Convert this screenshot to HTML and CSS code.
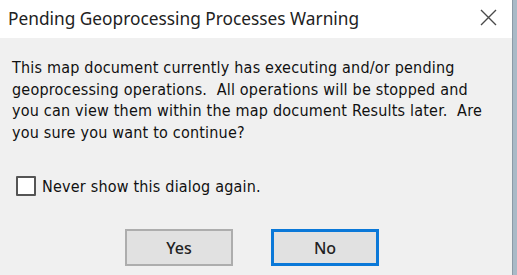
FILE: index.html
```html
<!DOCTYPE html>
<html>
<head>
<meta charset="utf-8">
<link rel="stylesheet" href="styles.css">
</head>
<body>
<div class="screen">
  <div class="dialog">
    <div class="titlebar">
      <span class="title">Pending Geoprocessing Processes Warning</span>
      <svg class="close" width="17" height="17" viewBox="0 0 17 17">
        <path d="M1 1 L16 16 M16 1 L1 16" stroke="#4a4a4a" stroke-width="1.4" fill="none"/>
      </svg>
    </div>
    <div class="content">
      <p class="message">This map document currently has executing and/or pending<br>geoprocessing operations.&nbsp; All operations will be stopped and<br>you can view them within the map document Results later.&nbsp; Are<br>you sure you want to continue?</p>
      <label class="check">
        <span class="box"></span>
        <span class="check-label">Never show this dialog again.</span>
      </label>
      <div class="buttons">
        <button class="btn">Yes</button>
        <button class="btn btn-default">No</button>
      </div>
    </div>
  </div>
  <div class="edge"></div>
</div>
</body>
</html>
```
FILE: styles.css
```css
html, body {
  margin: 0;
  padding: 0;
  width: 517px;
  height: 275px;
  overflow: hidden;
  background: #f0f0f0;
}
.screen {
  display: flex;
  width: 517px;
  height: 275px;
}
.dialog {
  width: 512px;
  display: flex;
  flex-direction: column;
  background: #f0f0f0;
}
.titlebar {
  height: 38px;
  background: #ffffff;
  display: flex;
  align-items: center;
  justify-content: space-between;
  padding: 0 15px 0 8px;
  flex-shrink: 0;
}
.title {
  font-family: "Noto Sans", "Open Sans", sans-serif;
  font-size: 17.3px;
  color: #222;
  margin-top: -1px;
}
.close {
  margin-top: -4px;
}
.content {
  flex: 1;
  display: flex;
  flex-direction: column;
  padding: 19px 0 0 12px;
}
.message {
  margin: 0;
  white-space: nowrap;
  font-family: "DejaVu Sans Condensed", "DejaVu Sans", sans-serif;
  font-stretch: condensed;
  font-size: 16px;
  letter-spacing: 0.2px;
  line-height: 21.5px;
  color: #111;
}
.check {
  display: flex;
  align-items: center;
  margin: 33px 0 0 4px;
  gap: 6px;
}
.box {
  width: 16px;
  height: 16px;
  border: 2px solid #555;
  background: #fff;
  border-radius: 1px;
}
.check-label {
  font-family: "DejaVu Sans Condensed", "DejaVu Sans", sans-serif;
  font-stretch: condensed;
  font-size: 16px;
  letter-spacing: 0.2px;
  color: #111;
}
.buttons {
  display: flex;
  margin: 33px 0 0 113px;
  gap: 38px;
}
.btn {
  width: 108px;
  height: 37px;
  background: #e1e1e1;
  border: 2px solid #adadad;
  font-family: "Noto Sans", sans-serif;
  font-size: 16px;
  font-weight: 500;
  color: #222;
  padding: 0;
}
.btn-default {
  border: 3px solid #0a78d8;
}
.edge {
  width: 5px;
  background: #a9bac7;
  border-left: 1px solid #8c9aa6;
  box-sizing: border-box;
}
```
